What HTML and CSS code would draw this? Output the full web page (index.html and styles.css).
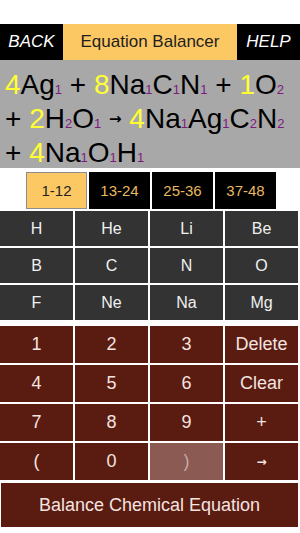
FILE: index.html
```html
<!DOCTYPE html>
<html lang="en">
<head>
    <meta charset="UTF-8">
    <meta name="viewport" content="width=device-width, initial-scale=1.0">
    <title>Equation Balancer</title>
    <link rel="stylesheet" href="styles.css">
</head>
<body>
    <div class="status"></div>
    <header class="topbar">
        <a class="side" href="#">BACK</a>
        <h1 class="title">Equation Balancer</h1>
        <a class="side" href="#">HELP</a>
    </header>

    <div class="equation">
        <div class="line"><span class="co">4</span>Ag<span class="sub">1</span> + <span class="co">8</span>Na<span class="sub">1</span>C<span class="sub">1</span>N<span class="sub">1</span> + <span class="co">1</span>O<span class="sub">2</span></div>
        <div class="line">+ <span class="co">2</span>H<span class="sub">2</span>O<span class="sub">1</span> <span class="arrow">&rarr;</span> <span class="co">4</span>Na<span class="sub">1</span>Ag<span class="sub">1</span>C<span class="sub">2</span>N<span class="sub">2</span></div>
        <div class="line">+ <span class="co">4</span>Na<span class="sub">1</span>O<span class="sub">1</span>H<span class="sub">1</span></div>
    </div>

    <nav class="tabs">
        <button class="tab active">1-12</button>
        <button class="tab">13-24</button>
        <button class="tab">25-36</button>
        <button class="tab">37-48</button>
    </nav>

    <div class="keys elements">
        <button>H</button><button>He</button><button>Li</button><button>Be</button>
        <button>B</button><button>C</button><button>N</button><button>O</button>
        <button>F</button><button>Ne</button><button>Na</button><button>Mg</button>
    </div>

    <div class="keys numbers">
        <button>1</button><button>2</button><button>3</button><button>Delete</button>
        <button>4</button><button>5</button><button>6</button><button>Clear</button>
        <button>7</button><button>8</button><button>9</button><button>+</button>
        <button>(</button><button>0</button><button class="off">)</button><button class="small">&rarr;</button>
    </div>

    <button class="balance">Balance Chemical Equation</button>
</body>
</html>
```

FILE: styles.css
```css
body {
    font-family: "Liberation Sans", Arial, Helvetica, sans-serif;
    margin: 0;
    padding: 0;
    background: #fff;
    width: 300px;
}

.status {
    height: 24px;
}

.topbar {
    display: flex;
    height: 36px;
    background: #000;
}

.side {
    width: 63px;
    display: flex;
    align-items: center;
    justify-content: center;
    color: #fff;
    font-style: italic;
    font-size: 17px;
    text-decoration: none;
}

.title {
    flex: 1;
    margin: 0;
    background: #fcc864;
    color: #1e1e1e;
    font-size: 17px;
    font-weight: normal;
    display: flex;
    align-items: center;
    justify-content: center;
}

.equation {
    background: #a8a8a8;
    height: 100px;
    padding: 8px 0 0 5px;
    font-size: 28px;
    color: #000;
    white-space: nowrap;
    overflow: hidden;
}

.line {
    height: 34px;
    line-height: 34px;
}

.line span {
    line-height: 1;
}

.co {
    color: #ffff33;
}

.sub {
    color: #7e1a80;
    font-size: 13px;
}

.arrow {
    font-family: "DejaVu Sans", sans-serif;
    font-weight: bold;
    font-size: 15px;
    vertical-align: 4px;
}

.tabs {
    display: flex;
    gap: 2px;
    padding-left: 26px;
    margin-top: 4px;
}

.tab {
    width: 61px;
    height: 37px;
    border: none;
    background: #000;
    color: #e8b860;
    font-family: inherit;
    font-size: 15px;
    padding: 0;
}

.tab.active {
    background: #fcc864;
    color: #222;
    border: 1px solid #8e8e8e;
}

.keys {
    display: grid;
    grid-template-columns: repeat(4, 1fr);
    gap: 2px;
    width: 298px;
}

.keys button {
    border: none;
    padding: 0;
    font-family: inherit;
}

.elements {
    margin-top: 2px;
    grid-auto-rows: 35px;
}

.elements button {
    background: #333;
    color: #f0f0f0;
    font-size: 16px;
}

.numbers {
    margin-top: 6px;
    grid-auto-rows: 37px;
}

.numbers button {
    background: #5a1b11;
    color: #f3e4e0;
    font-size: 18px;
}

.numbers button.off {
    background: #8a5a53;
    color: #c9a9a4;
}

.numbers button.small {
    font-family: "DejaVu Sans", sans-serif;
    font-weight: bold;
    font-size: 12px;
}

.balance {
    display: block;
    margin: 3px 0 0 1px;
    width: 297px;
    height: 44px;
    border: none;
    background: #5a1b11;
    color: #f3e4e0;
    font-family: inherit;
    font-size: 18px;
}
```
